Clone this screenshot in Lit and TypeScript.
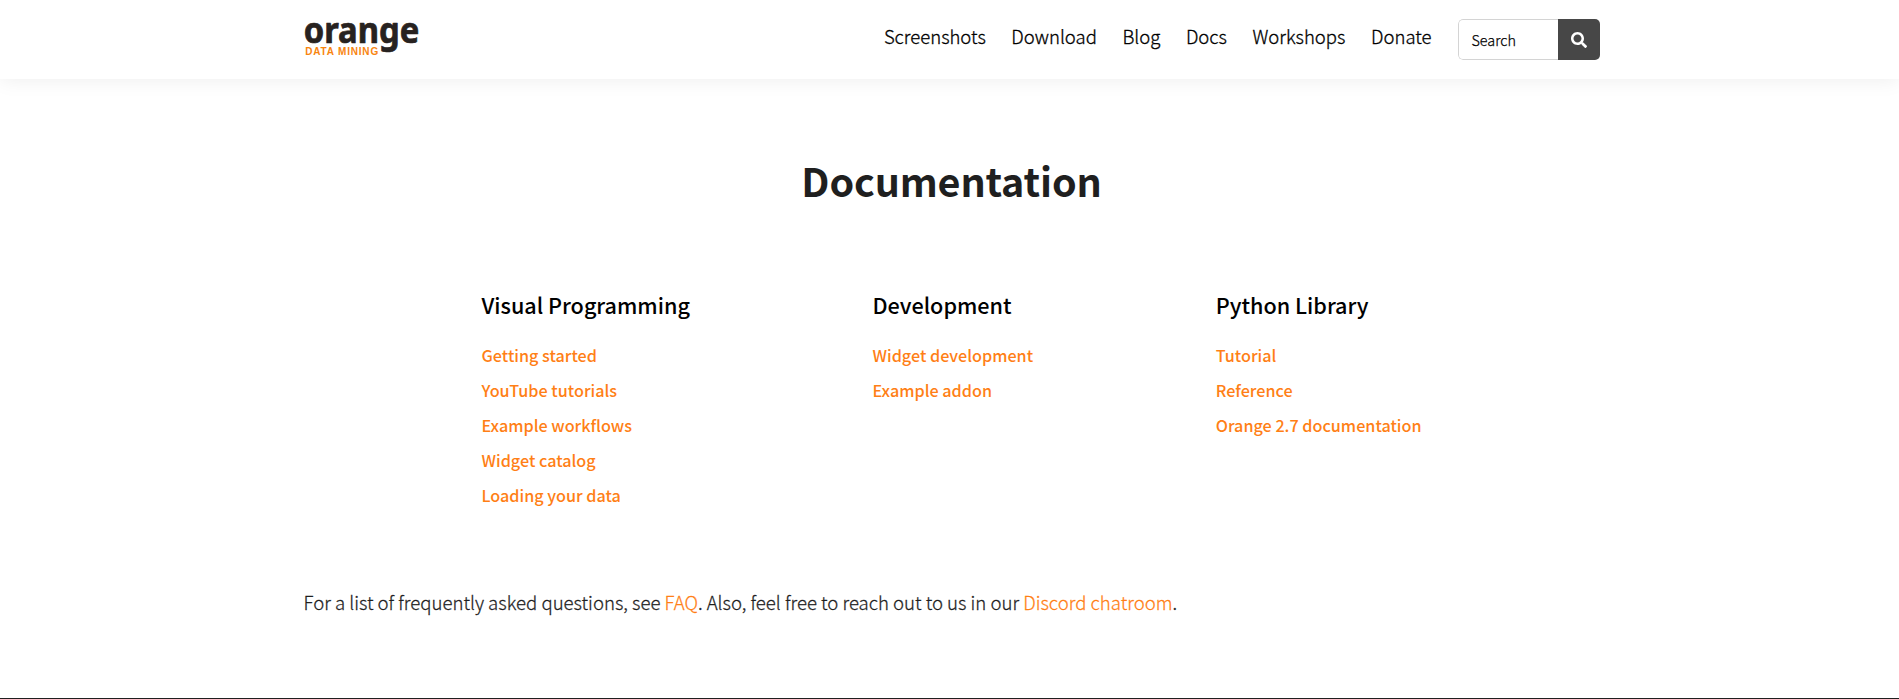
import { LitElement, html, css } from "lit";
import { customElement } from "lit/decorators.js";

const NAV = ["Screenshots", "Download", "Blog", "Docs", "Workshops", "Donate"];

const SECTIONS = [
  {
    title: "Visual Programming",
    links: ["Getting started", "YouTube tutorials", "Example workflows", "Widget catalog", "Loading your data"],
  },
  { title: "Development", links: ["Widget development", "Example addon"] },
  { title: "Python Library", links: ["Tutorial", "Reference", "Orange 2.7 documentation"] },
];

@customElement("site-header")
class SiteHeader extends LitElement {
  static styles = css`
    :host { display: block; height: 79px; background: #fff; box-shadow: 0 0 20px rgba(0, 0, 0, 0.08); }
    .bar { width: 1296px; height: 79px; margin: 0 auto; padding-left: 5px; display: flex; align-items: flex-start; }
    .logo { width: 118px; height: 56px; margin-top: 8px; display: block; overflow: visible; }
    .word { font: 700 36px "Noto Sans", sans-serif; fill: #272220; stroke: #272220; stroke-width: 0.7; stroke-linejoin: round; }
    .tag { font: 700 10px "Liberation Sans", sans-serif; fill: #f8850f; }
    nav { margin-left: auto; margin-top: 18px; display: flex; gap: 25.6px; }
    a { color: #000; text-decoration: none; font-size: 18.5px; line-height: 36px; font-weight: 300; -webkit-text-stroke: 0.3px currentColor; }
    .search { margin: 19px 0 0 26.5px; width: 142px; height: 41px; display: flex; box-sizing: border-box; border-radius: 5px; overflow: hidden; }
    .field { flex: 1; box-sizing: border-box; border: 1px solid #d4d4d4; border-right: 0; border-radius: 5px 0 0 5px; padding: 0 0 0 12.5px; font-size: 14.4px; font-weight: 300; -webkit-text-stroke: 0.25px currentColor; line-height: 39px; color: #000; }
    .go { width: 42px; background: #474747; display: flex; align-items: center; justify-content: center; }
    .go svg { width: 16px; height: 16px; display: block; }
  `;
  render() {
    return html`<div class="bar">
      <svg class="logo" viewBox="0 0 118 56">
        <text class="word" x="-0.3" y="35" textLength="115.5" lengthAdjust="spacingAndGlyphs">orange</text>
        <text class="tag" x="1.2" y="47.3" textLength="73" lengthAdjust="spacing">DATA MINING</text>
      </svg>
      <nav>${NAV.map((n) => html`<a>${n}</a>`)}</nav>
      <div class="search">
        <div class="field">Search</div>
        <div class="go">
          <svg viewBox="0 0 512 512"><path fill="#fff" d="M505 442.7L405.3 343c-4.5-4.5-10.6-7-17-7H372c27.6-35.3 44-79.7 44-128C416 93.1 322.9 0 208 0S0 93.1 0 208s93.1 208 208 208c48.3 0 92.7-16.4 128-44v16.3c0 6.4 2.5 12.5 7 17l99.7 99.7c9.4 9.4 24.6 9.4 33.9 0l28.3-28.3c9.4-9.4 9.4-24.6.1-34zM208 336c-70.7 0-128-57.2-128-128 0-70.7 57.2-128 128-128 70.7 0 128 57.2 128 128 0 70.7-57.2 128-128 128z"/></svg>
        </div>
      </div>
    </div>`;
  }
}

@customElement("app-root")
class AppRoot extends LitElement {
  static styles = css`
    :host { display: flex; flex-direction: column; height: 699px; overflow: hidden; background: #fff; color: #1f1f1f; font-family: "Noto Sans CJK SC", sans-serif; }
    site-header { flex: none; }
    main { width: 1296px; margin: 0 auto; padding-left: 4px; flex: 1; }
    h1 { margin: 71px 0 0; font-size: 39.5px; line-height: 60px; font-weight: 700; text-align: center; letter-spacing: -0.15px; }
    .sections { display: flex; gap: 182.6px; margin: 80px 0 0 178px; height: 223px; }
    h2 { margin: 0 0 18px; font-size: 21.6px; line-height: 30px; font-weight: 500; color: #000; white-space: nowrap; }
    ul { margin: 0; padding: 0; list-style: none; }
    li { font-size: 16.2px; line-height: 35px; font-weight: 500; color: #ff7f16; white-space: nowrap; }
    p { margin: 74px 0 0; font-size: 18.59px; line-height: 30px; font-weight: 300; -webkit-text-stroke: 0.26px currentColor; }
    p a { color: #ff7f16; }
    footer { height: 1px; background: #1f1f1f; flex: none; }
  `;
  render() {
    return html`
      <site-header></site-header>
      <main>
        <h1>Documentation</h1>
        <div class="sections">
          ${SECTIONS.map((s) => html`<section><h2>${s.title}</h2><ul>${s.links.map((l) => html`<li>${l}</li>`)}</ul></section>`)}
        </div>
        <p>For a list of frequently asked questions, see <a>FAQ</a>. Also, feel free to reach out to us in our <a>Discord chatroom</a>.</p>
      </main>
      <footer></footer>`;
  }
}
